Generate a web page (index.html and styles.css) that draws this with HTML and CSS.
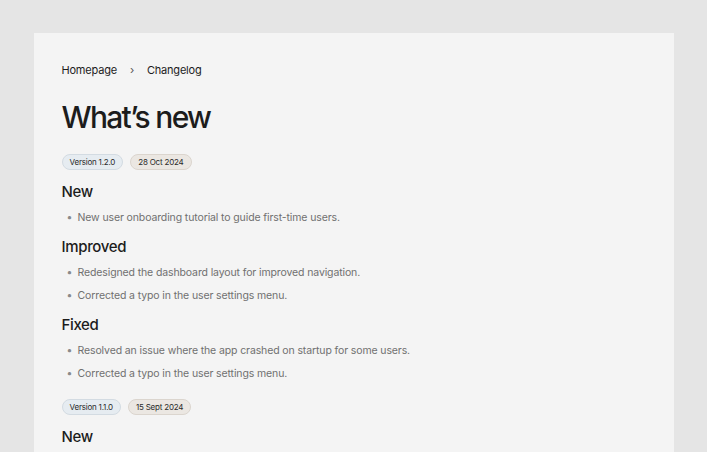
FILE: index.html
```html
<!DOCTYPE html>
<html lang="en">
<head>
  <meta charset="UTF-8">
  <meta name="viewport" content="width=device-width, initial-scale=1.0">
  <title>Changelog</title>
  <link rel="stylesheet" href="styles.css">
</head>
<body>
  <div class="page">
    <nav class="crumbs">
      <a href="#">Homepage</a>
      <span class="sep">›</span>
      <a href="#">Changelog</a>
    </nav>

    <h1 class="title">What’s new</h1>

    <section class="release">
      <div class="tags">
        <span class="tag version">Version 1.2.0</span>
        <span class="tag date">28 Oct 2024</span>
      </div>

      <h2 class="group">New</h2>
      <ul class="items">
        <li>New user onboarding tutorial to guide first-time users.</li>
      </ul>

      <h2 class="group">Improved</h2>
      <ul class="items">
        <li>Redesigned the dashboard layout for improved navigation.</li>
        <li>Corrected a typo in the user settings menu.</li>
      </ul>

      <h2 class="group">Fixed</h2>
      <ul class="items">
        <li>Resolved an issue where the app crashed on startup for some users.</li>
        <li>Corrected a typo in the user settings menu.</li>
      </ul>
    </section>

    <section class="release">
      <div class="tags">
        <span class="tag version">Version 1.1.0</span>
        <span class="tag date">15 Sept 2024</span>
      </div>

      <h2 class="group">New</h2>
    </section>
  </div>
</body>
</html>
```

FILE: styles.css
```css
/* Grey backdrop with the changelog card centred on it */
body {
  margin: 0;
  background: #e5e5e5;
  font-family: Inter, "Noto Sans", sans-serif;
  color: #1c1c1c;
}

.page {
  max-width: 640px;
  margin: 33px auto 0;
  padding: 28px 28px 40px;
  box-sizing: border-box;
  background: #f4f4f4;
}

/* Breadcrumb */
.crumbs {
  display: flex;
  align-items: center;
  gap: 12px;
  font-size: 11px;
  line-height: 18px;
  letter-spacing: -0.2px;
}
.crumbs a {
  color: #1c1c1c;
  text-decoration: none;
}
.crumbs .sep {
  color: #555;
  padding: 0 1px;
}

/* Page title */
.title {
  margin: 20px 0 19px;
  font-size: 30px;
  line-height: 36px;
  font-weight: 500;
  letter-spacing: -1.7px;
}

/* Version and date pills */
.tags {
  display: flex;
  gap: 7px;
}
.tag {
  padding: 0 7px;
  font-size: 8px;
  line-height: 14px;
  letter-spacing: -0.2px;
  border-radius: 8px;
  border: 1px solid #d8dadc;
  color: #2a2a2a;
}
.tag.version {
  background: #e6ecf1;
  border-color: #d3dbe2;
}
.tag.date {
  background: #ebe7e2;
  border-color: #dbd5ce;
}

/* Change groups */
.group {
  margin: 8.5px 0 3.5px;
  font-size: 15px;
  line-height: 20px;
  font-weight: 500;
  letter-spacing: -0.35px;
}
.tags + .group {
  margin-top: 12px;
}

.items {
  list-style: none;
  margin: 0;
  padding: 0;
}
.items li {
  position: relative;
  padding-left: 16px;
  font-size: 10.5px;
  line-height: 23px;
  letter-spacing: -0.12px;
  color: #707070;
}
.items li::before {
  content: "•";
  position: absolute;
  left: 5px;
  color: #8a8a8a;
}

.release + .release {
  margin-top: 14px;
}
```
